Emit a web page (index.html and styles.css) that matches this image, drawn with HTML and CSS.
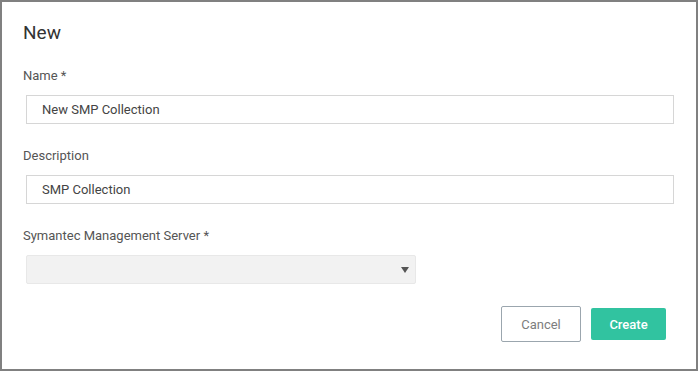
FILE: index.html
```html
<!DOCTYPE html>
<html lang="en">
	<head>
		<meta charset="utf-8">
		<title>New</title>
		<link rel="stylesheet" href="styles.css">
	</head>
	<body>
		<div class="dialog">
			<h1 class="title">New</h1>

			<form class="form" onsubmit="return false;">
				<div class="field">
					<label class="label" for="name">Name *</label>
					<input class="input" type="text" id="name" value="New SMP Collection">
				</div>

				<div class="field">
					<label class="label" for="desc">Description</label>
					<input class="input" type="text" id="desc" value="SMP Collection">
				</div>

				<div class="field">
					<label class="label" for="sms">Symantec Management Server *</label>
					<div class="select">
						<select id="sms"></select>
						<span class="caret"></span>
					</div>
				</div>

				<div class="actions">
					<button type="button" class="btn btn-cancel">Cancel</button>
					<button type="submit" class="btn btn-create">Create</button>
				</div>
			</form>
		</div>
	</body>
</html>
```

FILE: styles.css
```css
html, body {margin:0; padding:0;}
body {font:13px/1.5 Roboto, "Liberation Sans", sans-serif; color:#444; background:#fff;}

.dialog {width:698px; height:371px; box-sizing:border-box; border:2px solid #808080; padding:19px 22px 0 21px;}
.title {margin:0 0 21px 0; font-size:19px; font-weight:400; line-height:24px; color:#333;}

.field {display:flex; flex-direction:column; align-items:flex-start; margin-bottom:22px;}
.label {display:block; line-height:20px; margin-bottom:9px; color:#555;}

.input {box-sizing:border-box; width:648px; height:29px; margin-left:3px; border:1px solid #d6d6d6; padding:0 15px; font:13px Roboto, "Liberation Sans", sans-serif; color:#444; outline:none;}

.select {position:relative; margin-left:3px; width:390px; height:29px;}
.select select {appearance:none; -webkit-appearance:none; box-sizing:border-box; width:100%; height:100%; background:#f2f2f2; border:1px solid #e8e8e8; border-radius:2px; outline:none;}
.caret {position:absolute; right:7px; top:12px; width:0; height:0; border-left:4px solid transparent; border-right:4px solid transparent; border-top:6px solid #555;}

.actions {display:flex; justify-content:flex-end; align-items:center; gap:10px; margin-top:3px; padding-right:8px;}
.btn {font:13px Roboto, "Liberation Sans", sans-serif; cursor:pointer; border-radius:2px;}
.btn-cancel {width:80px; height:36px; background:#fff; border:1px solid #9ba6ae; color:#7d7d7d;}
.btn-create {width:75px; height:32px; background:#31c3a0; border:0; color:#fff; font-weight:500;}
```
